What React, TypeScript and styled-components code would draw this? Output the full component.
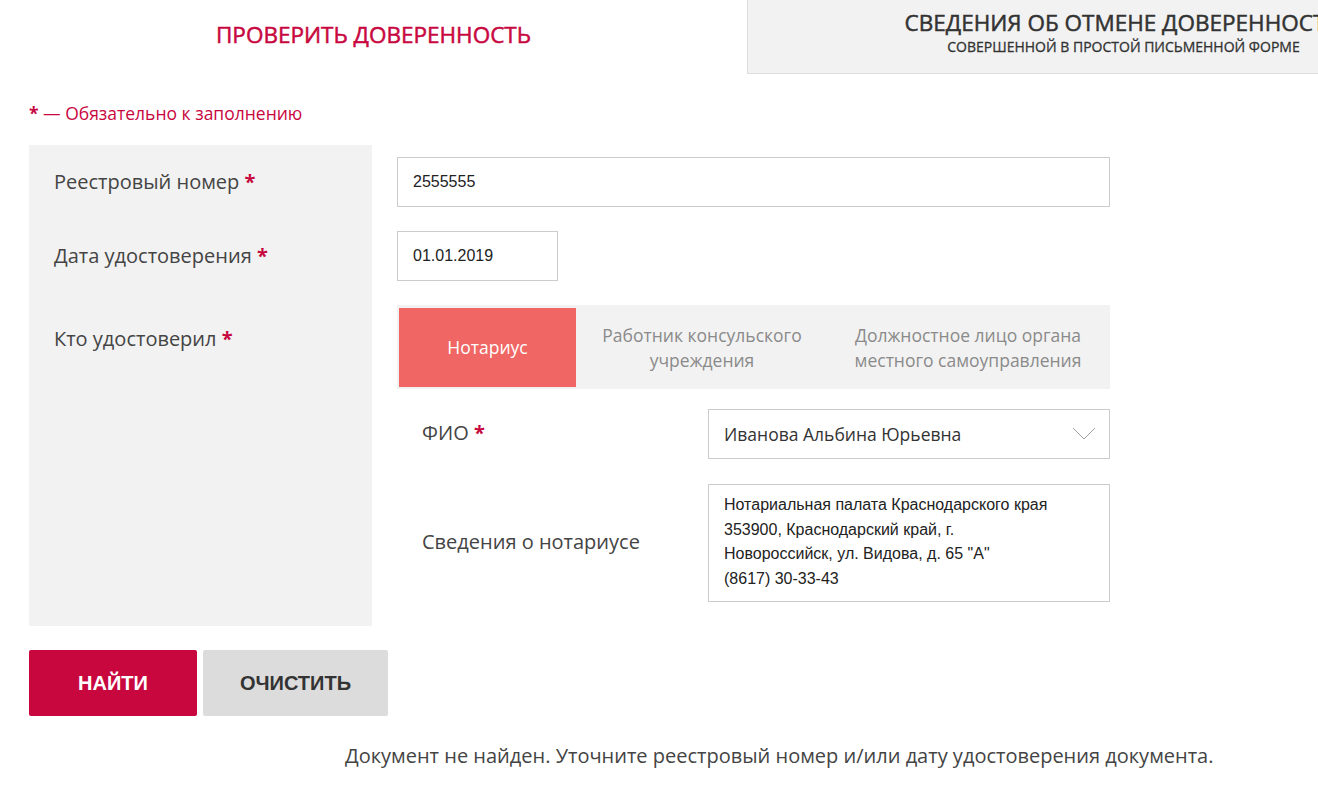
import styled, { createGlobalStyle } from "styled-components";

const GlobalStyle = createGlobalStyle`
  html, body {
    margin: 0;
    padding: 0;
    background: #ffffff;
  }
  body {
    font-family: "Open Sans", "Liberation Sans", sans-serif;
    color: #444444;
    overflow: hidden;
  }
`;

const RED = "#c8073f";
const GREY = "#f2f2f2";

const tabs = ["Нотариус", "Работник консульского учреждения", "Должностное лицо органа местного самоуправления"];
const tabWidths = [177, 252, 280];

const App = () => {
  return (
    <Page>
      <GlobalStyle />
      <TabBar>
        <TopTab $active>
          <TopTitle $active>ПРОВЕРИТЬ ДОВЕРЕННОСТЬ</TopTitle>
        </TopTab>
        <TopTab>
          <TopTitle>СВЕДЕНИЯ ОБ ОТМЕНЕ ДОВЕРЕННОСТИ</TopTitle>
          <TopSub>СОВЕРШЕННОЙ В ПРОСТОЙ ПИСЬМЕННОЙ ФОРМЕ</TopSub>
        </TopTab>
      </TabBar>

      <Content>
        <Note>
          <Star>*</Star> — Обязательно к заполнению
        </Note>

        <Form>
          <Row>
            <LabelCell>
              <Label>
                Реестровый номер <Star>*</Star>
              </Label>
            </LabelCell>
            <FieldCell $top={12} $bottom={12}>
              <Input $width={713}>2555555</Input>
            </FieldCell>
          </Row>
          <Row>
            <LabelCell>
              <Label>
                Дата удостоверения <Star>*</Star>
              </Label>
            </LabelCell>
            <FieldCell $top={12} $bottom={12}>
              <Input $width={161}>01.01.2019</Input>
            </FieldCell>
          </Row>
          <Row>
            <LabelCell $alignTop>
              <Label>
                Кто удостоверил <Star>*</Star>
              </Label>
            </LabelCell>
            <FieldCell $top={12} $bottom={24}>
              <Segments>
                {tabs.map((t, i) => (
                  <Segment key={t} $active={i === 0} style={{ width: tabWidths[i] }}>
                    {t}
                  </Segment>
                ))}
              </Segments>
              <SubForm>
                <SubRow>
                  <SubLabel>
                    ФИО <Star>*</Star>
                  </SubLabel>
                  <Select>
                    <SelectText>Иванова Альбина Юрьевна</SelectText>
                    <svg width="24" height="14" viewBox="0 0 24 14">
                      <polyline points="1,1 12,12 23,1" fill="none" stroke="#a0a0a0" strokeWidth="1" />
                    </svg>
                  </Select>
                </SubRow>
                <SubRow>
                  <SubLabel>Сведения о нотариусе</SubLabel>
                  <InfoBox>
                    Нотариальная палата Краснодарского края
                    <br />
                    353900, Краснодарский край, г.
                    <br />
                    Новороссийск, ул. Видова, д. 65 "А"
                    <br />
                    (8617) 30-33-43
                  </InfoBox>
                </SubRow>
              </SubForm>
            </FieldCell>
          </Row>
        </Form>

        <Buttons>
          <Button $primary>НАЙТИ</Button>
          <Button>ОЧИСТИТЬ</Button>
        </Buttons>

        <Message>
          Документ не найден. Уточните реестровый номер и/или дату удостоверения документа.
        </Message>
      </Content>
    </Page>
  );
};

export default App;

const Page = styled.div`
  width: 1318px;
  height: 794px;
  overflow: hidden;
`;

const TabBar = styled.div`
  display: flex;
  width: 1500px;
`;

const TopTab = styled.div<{ $active?: boolean }>`
  width: ${(p) => (p.$active ? "747px" : "752px")};
  height: 74px;
  box-sizing: border-box;
  display: flex;
  flex-direction: column;
  align-items: center;
  justify-content: center;
  background: ${(p) => (p.$active ? "#ffffff" : GREY)};
  border-left: ${(p) => (p.$active ? "none" : "1px solid #dddddd")};
  border-bottom: ${(p) => (p.$active ? "none" : "1px solid #dddddd")};
`;

const TopTitle = styled.div<{ $active?: boolean }>`
  font-size: 22.5px;
  line-height: 28px;
  white-space: nowrap;
  -webkit-text-stroke: 0.5px currentColor;
  color: ${(p) => (p.$active ? RED : "#333333")};
  margin-top: ${(p) => (p.$active ? "-4px" : "-7px")};
`;

const TopSub = styled.div`
  font-size: 14px;
  line-height: 20px;
  -webkit-text-stroke: 0.3px currentColor;
  color: #333333;
`;

const Content = styled.div`
  padding: 28px 29px 0;
`;

const Note = styled.div`
  font-size: 17.5px;
  line-height: 22px;
  color: ${RED};
`;

const Star = styled.span`
  color: ${RED};
  font-weight: 700;
`;

const Form = styled.div`
  margin-top: 21px;
  display: flex;
  flex-direction: column;
`;

const Row = styled.div`
  display: flex;
`;

const LabelCell = styled.div<{ $alignTop?: boolean }>`
  width: 343px;
  box-sizing: border-box;
  background: ${GREY};
  padding-left: 25px;
  display: flex;
  align-items: ${(p) => (p.$alignTop ? "flex-start" : "center")};
  padding-top: ${(p) => (p.$alignTop ? "33px" : "0")};
`;

const Label = styled.div`
  font-size: 20px;
  line-height: 26px;
  color: #444444;
`;

const FieldCell = styled.div<{ $top: number; $bottom: number }>`
  margin-left: 25px;
  padding-top: ${(p) => p.$top}px;
  padding-bottom: ${(p) => p.$bottom}px;
  width: 713px;
`;

const Input = styled.div<{ $width: number }>`
  width: ${(p) => p.$width}px;
  height: 50px;
  box-sizing: border-box;
  border: 1px solid #cccccc;
  padding: 0 15px;
  display: flex;
  align-items: center;
  font-family: "Liberation Sans", Arial, sans-serif;
  font-size: 16px;
  color: #222222;
`;

const Segments = styled.div`
  display: flex;
  background: ${GREY};
  padding: 3px 2px 2px;
  height: 84px;
  box-sizing: border-box;
`;

const Segment = styled.div<{ $active?: boolean }>`
  display: flex;
  align-items: center;
  justify-content: center;
  text-align: center;
  font-size: 17.5px;
  line-height: 25px;
  padding: 0 8px;
  box-sizing: border-box;
  background: ${(p) => (p.$active ? "#f06664" : "transparent")};
  color: ${(p) => (p.$active ? "#ffffff" : "#8a8a8a")};
`;

const SubForm = styled.div`
  margin-top: 20px;
  display: flex;
  flex-direction: column;
  gap: 25px;
`;

const SubRow = styled.div`
  display: flex;
  align-items: center;
`;

const SubLabel = styled.div`
  width: 311px;
  box-sizing: border-box;
  padding-left: 25px;
  font-size: 20px;
  line-height: 26px;
  color: #444444;
  margin-top: -2px;
`;

const Select = styled.div`
  width: 402px;
  height: 50px;
  box-sizing: border-box;
  border: 1px solid #cccccc;
  padding: 0 13px 0 15px;
  display: flex;
  align-items: center;
  justify-content: space-between;
`;

const SelectText = styled.span`
  font-size: 17.5px;
  color: #333333;
`;

const InfoBox = styled.div`
  width: 402px;
  height: 118px;
  box-sizing: border-box;
  border: 1px solid #cccccc;
  padding: 8px 15px;
  font-family: "Liberation Sans", Arial, sans-serif;
  font-size: 16px;
  line-height: 24.5px;
  color: #222222;
`;

const Buttons = styled.div`
  margin-top: 24px;
  display: flex;
  gap: 6px;
`;

const Button = styled.div<{ $primary?: boolean }>`
  width: ${(p) => (p.$primary ? "168px" : "185px")};
  height: 66px;
  display: flex;
  align-items: center;
  justify-content: center;
  font-family: "Liberation Sans", Arial, sans-serif;
  font-weight: 700;
  font-size: 20px;
  background: ${(p) => (p.$primary ? RED : "#dcdcdc")};
  color: ${(p) => (p.$primary ? "#ffffff" : "#333333")};
  border-radius: 2px;
`;

const Message = styled.div`
  margin-top: 27px;
  margin-left: 316px;
  font-size: 20px;
  line-height: 26px;
  color: #444444;
`;
